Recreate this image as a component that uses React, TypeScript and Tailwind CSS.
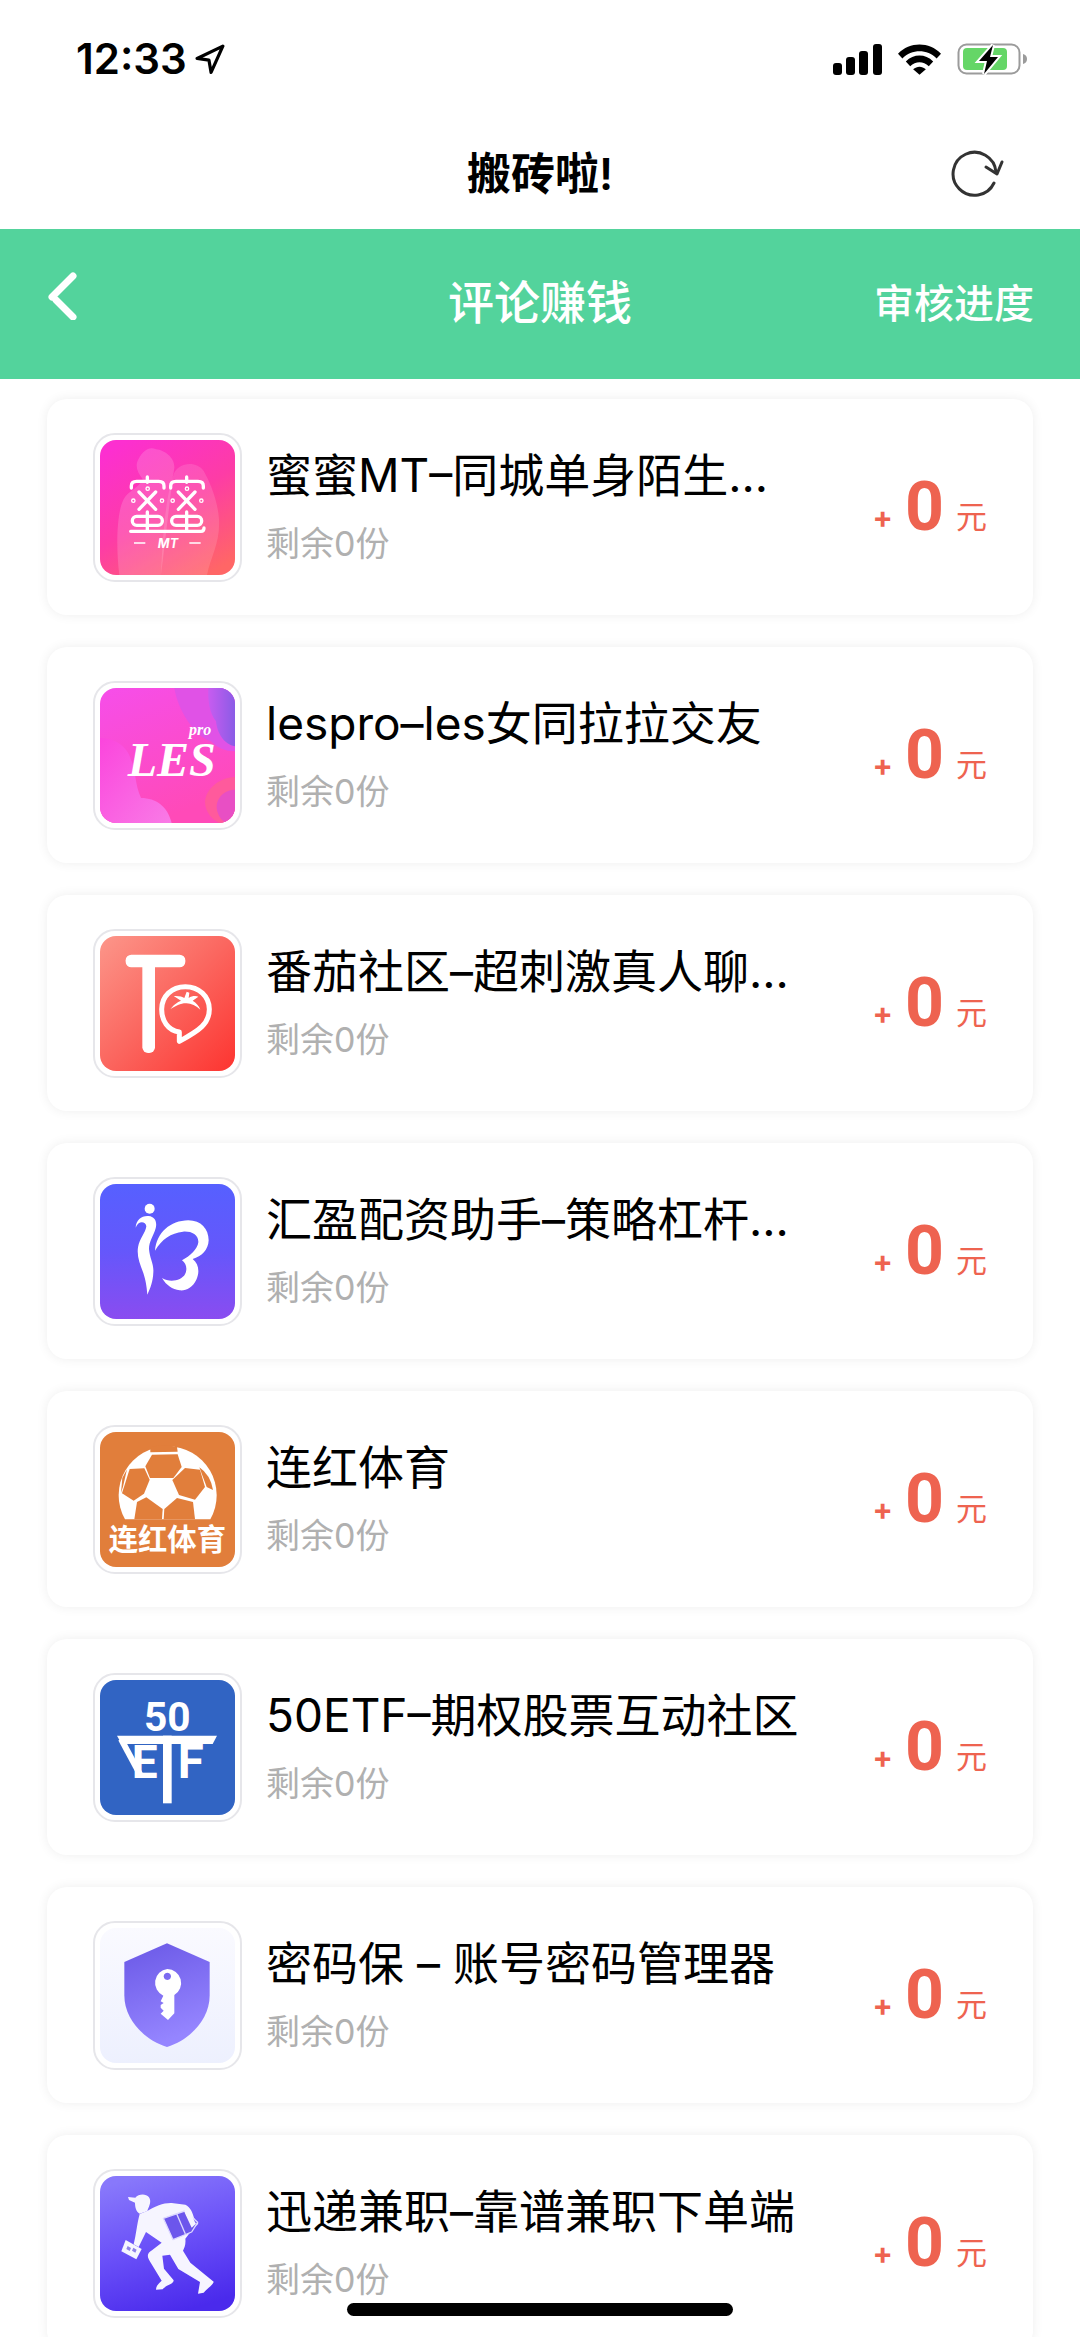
import React from 'react';

type Task = {
  name: string;
  left: number;
  reward: number;
  icon: React.ReactNode;
};

const MimiIcon = () => (
  <svg viewBox="47 52 405 405" className="size-full" aria-hidden="true">
    <defs>
      <linearGradient id="mimi" x1="0.2" y1="0" x2="0.8" y2="1">
        <stop offset="0" stopColor="#fc2fd0" />
        <stop offset="0.5" stopColor="#fd3ca6" />
        <stop offset="1" stopColor="#ff6666" />
      </linearGradient>
    </defs>
    <rect x="47" y="52" width="405" height="405" fill="url(#mimi)" />
    <path
      d="M105 457C95 380 96 270 118 230 130 205 160 200 175 170 160 150 150 130 163 108 175 85 195 70 215 80 240 82 272 105 270 135 268 155 262 170 262 190L230 457z"
      fill="#fff"
      opacity="0.16"
    />
    <path
      d="M230 457C235 330 245 220 268 155 280 120 335 112 358 145 375 175 400 230 404 290 408 360 380 400 368 457z"
      fill="#fff"
      opacity="0.13"
    />
    {[0, 118].map((dx) => (
      <g key={dx} transform={`translate(${dx} 0)`} stroke="#fff" strokeWidth="10" strokeLinecap="round" fill="none">
        <path d="M189 163v16M141 196v-6q0-14 16-14h66q16 0 16 14v6" />
        <path d="M164 208l50 52M214 208l-50 52" />
        <circle cx="190" cy="198" r="2" />
        <circle cx="147" cy="234" r="2" />
        <circle cx="233" cy="234" r="2" />
        <rect x="144" y="281" width="90" height="27" rx="13" />
        <path d="M189 268v56" />
      </g>
    ))}
    <path d="M139 326h211q9 0 9-10" stroke="#fff" strokeWidth="10" strokeLinecap="round" fill="none" />
    <path d="M149 361h34M315 361h34" stroke="#fff" strokeWidth="5" />
    <text x="251" y="375" textAnchor="middle" className="fill-white text-[38px] font-bold italic">
      MT
    </text>
  </svg>
);

const LesIcon = () => (
  <svg viewBox="47 45 405 405" className="size-full" aria-hidden="true">
    <defs>
      <linearGradient id="les" x1="0" y1="0" x2="0.4" y2="1">
        <stop offset="0" stopColor="#f64eea" />
        <stop offset="1" stopColor="#ff4ab8" />
      </linearGradient>
      <linearGradient id="lesCorner" x1="0" y1="0" x2="1" y2="0">
        <stop offset="0" stopColor="#c85cf0" />
        <stop offset="1" stopColor="#8a5ce6" />
      </linearGradient>
      <linearGradient id="lesWave" x1="0" y1="0" x2="1" y2="1">
        <stop offset="0" stopColor="#fb45dd" />
        <stop offset="1" stopColor="#f97be6" />
      </linearGradient>
    </defs>
    <rect x="47" y="45" width="405" height="405" fill="url(#les)" />
    <path d="M270 45H452V235C420 235 400 225 380 205 330 190 280 110 270 45z" fill="#e052e6" />
    <path d="M372 45H452V220C420 215 398 180 395 145 375 120 370 80 372 45z" fill="url(#lesCorner)" />
    <path d="M47 195C90 195 130 220 140 260 155 290 150 330 170 375 215 375 250 400 262 450H47z" fill="url(#lesWave)" />
    <path d="M452 312C400 315 365 350 362 385 362 420 385 440 405 450H452z" fill="#ff5a9c" />
    <path d="M452 350C420 350 395 375 397 405 400 430 415 445 425 450H452z" fill="#e84fc4" />
    <text x="130" y="310" className="fill-white font-['Liberation_Serif',serif] text-[144px] font-bold italic">
      LES
    </text>
    <text x="314" y="185" className="fill-white font-['Liberation_Serif',serif] text-[48px] font-bold italic">
      pro
    </text>
  </svg>
);

const TomatoIcon = () => (
  <svg viewBox="47 52 405 405" className="size-full" aria-hidden="true">
    <defs>
      <linearGradient id="tomato" x1="0" y1="0" x2="1" y2="1">
        <stop offset="0" stopColor="#fc968a" />
        <stop offset="0.5" stopColor="#fb665f" />
        <stop offset="1" stopColor="#fd3430" />
      </linearGradient>
    </defs>
    <rect x="47" y="52" width="405" height="405" fill="url(#tomato)" />
    <rect x="124" y="108" width="179" height="38" rx="17" fill="#fff" />
    <rect x="174" y="112" width="38" height="291" rx="17" fill="#fff" />
    <path
      d="M285 368v-28C250 335 232 305 232 272 232 233 262 204 303 204S375 233 375 272C375 315 345 335 285 368z"
      stroke="#fff"
      strokeWidth="15"
      strokeLinejoin="round"
      fill="none"
    />
    <path
      d="M258 272C270 255 282 250 290 246L268 232C284 231 294 234 300 238L307 219 315 222 313 238C322 232 334 231 342 234L325 246C336 252 344 262 348 273 335 260 318 253 304 254 290 254 272 262 258 272z"
      fill="#fff"
    />
  </svg>
);

const HuiyingIcon = () => (
  <svg viewBox="47 45 405 405" className="size-full" aria-hidden="true">
    <defs>
      <linearGradient id="huiying" x1="0" y1="0" x2="0" y2="1">
        <stop offset="0" stopColor="#5660ff" />
        <stop offset="0.5" stopColor="#6557fb" />
        <stop offset="1" stopColor="#8a4cf0" />
      </linearGradient>
    </defs>
    <rect x="47" y="45" width="405" height="405" fill="url(#huiying)" />
    <circle cx="196" cy="119" r="15" fill="#fff" />
    <path
      d="M154 176C155 152 173 139 193 141 212 143 219 158 214 178 208 200 194 218 194 240 196 268 209 285 207 310 206 338 198 358 189 377 187 350 184 335 177 312 167 285 157 262 161 235 166 207 184 191 186 172 184 157 162 154 154 176z"
      fill="#fff"
    />
    <path
      d="M212 245C217 190 258 155 312 154 350 154 373 180 373 214 372 243 352 262 325 270 343 284 347 308 336 332 325 355 305 366 286 364 264 361 246 349 233 327 258 343 292 334 302 316 310 300 306 283 293 274 317 262 340 240 342 220 343 196 320 186 296 188 260 192 232 211 212 245z"
      fill="#fff"
    />
  </svg>
);

const FootballIcon = () => (
  <svg viewBox="47 52 405 405" className="size-full" aria-hidden="true">
    <rect x="47" y="52" width="405" height="405" fill="#e17e3b" />
    <path d="M122 314A147 147 0 1 1 378 314z" fill="#fff" />
    <g fill="#e17e3b">
      <path d="M203 120l77-1 12 38-25 33H197l-14-35z" />
      <path d="M198 98Q240 86 278 97l2 14-82 2z" />
      <path d="M136 163l44-2 16 34-17 42-31 21-35-22z" />
      <path d="M302 160l45 5 15 52-30 38-48-14-20-45z" />
      <path d="M345 158Q378 180 386 226l-19-9z" />
      <path d="M186 248l49 35-2 31H150l8-52z" />
      <path d="M278 250l48 12 6 52H238l2-31z" />
      <path d="M114 190l14-26-12 52-6 18z" />
    </g>
    <text x="249" y="405" textAnchor="middle" className="fill-white text-[88px] font-bold">
      连红体育
    </text>
  </svg>
);

const EtfIcon = () => (
  <svg viewBox="47 45 405 405" className="size-full" aria-hidden="true">
    <rect x="47" y="45" width="405" height="405" fill="#3164c3" />
    <text x="249" y="199" textAnchor="middle" className="fill-white font-[Roboto,sans-serif] text-[122px] font-bold">
      50
    </text>
    <path d="M98 212h300l-13 25H112z" fill="#fff" />
    <path d="M110 222L168 330" stroke="#fff" strokeWidth="18" />
    <rect x="236" y="212" width="26" height="203" fill="#fff" />
    <text x="142" y="338" className="fill-white font-[Roboto,sans-serif] text-[138px] font-bold">
      E
    </text>
    <text x="280" y="338" className="fill-white font-[Roboto,sans-serif] text-[142px] font-bold">
      F
    </text>
  </svg>
);

const ShieldIcon = () => (
  <svg viewBox="47 55 405 405" className="size-full" aria-hidden="true">
    <defs>
      <linearGradient id="shieldBg" x1="0" y1="0" x2="0" y2="1">
        <stop offset="0" stopColor="#fafaff" />
        <stop offset="1" stopColor="#edf0fe" />
      </linearGradient>
      <linearGradient id="shield" x1="0" y1="0" x2="0.3" y2="1">
        <stop offset="0" stopColor="#6a58e6" />
        <stop offset="1" stopColor="#9585ff" />
      </linearGradient>
    </defs>
    <rect x="47" y="52" width="405" height="410" fill="url(#shieldBg)" />
    <path d="M248 101L376 157V258C376 325 320 390 248 412 176 390 120 325 120 258V157z" fill="url(#shield)" />
    <path
      d="M249 178a42 42 0 0 1 21 78V311L251 331 229 312 238 303 229 294V286L238 280 229 275 237 258A42 42 0 0 1 249 178zM249 189a11 11 0 1 0 .1 0z"
      fill="#fff"
      fillRule="evenodd"
    />
  </svg>
);

const CourierIcon = () => (
  <svg viewBox="47 47 405 405" className="size-full" aria-hidden="true">
    <defs>
      <linearGradient id="courier" x1="0.3" y1="0" x2="0.6" y2="1">
        <stop offset="0" stopColor="#8878fb" />
        <stop offset="0.5" stopColor="#6a50f8" />
        <stop offset="1" stopColor="#4a2aec" />
      </linearGradient>
    </defs>
    <rect x="47" y="45" width="405" height="410" fill="url(#courier)" />
    <g fill="#f6f5ff">
      <path d="M131 110L153 112C162 101 184 98 194 111 203 125 193 140 189 152L166 160C155 153 152 140 152 127L134 119z" />
      <path d="M166 161L190 151C212 138 238 127 262 128L303 133C318 140 324 155 329 172L342 190 325 206 303 235C305 252 300 262 296 271L318 307 388 364C389 372 368 385 358 397L341 400 347 365 282 326 257 283 234 286 239 325 268 360C268 372 245 374 235 387L215 388C215 375 225 368 232 361L202 312C186 288 187 280 203 270L232 247 185 215 163 260 148 252C155 225 158 190 166 161z" />
      <path d="M124 239L172 266 156 297 111 273z" />
    </g>
    <path d="M237 174L301 152 340 186 322 215 266 238z" fill="#6c56ec" stroke="#ddd8ff" strokeWidth="4" strokeLinejoin="round" />
    <path d="M277 160L303 221" stroke="#ddd8ff" strokeWidth="4" />
    <path d="M300 140C318 148 323 170 335 190L322 202 314 185 301 157z" fill="#f6f5ff" />
    <path d="M130 257l10 6-4 9-10-6zM147 262l10 6-4 9-10-6z" fill="#8f82e8" />
  </svg>
);

const tasks: Task[] = [
  { name: '蜜蜜MT–同城单身陌生...', left: 0, reward: 0, icon: <MimiIcon /> },
  { name: 'lespro–les女同拉拉交友', left: 0, reward: 0, icon: <LesIcon /> },
  { name: '番茄社区–超刺激真人聊...', left: 0, reward: 0, icon: <TomatoIcon /> },
  { name: '汇盈配资助手–策略杠杆...', left: 0, reward: 0, icon: <HuiyingIcon /> },
  { name: '连红体育', left: 0, reward: 0, icon: <FootballIcon /> },
  { name: '50ETF–期权股票互动社区', left: 0, reward: 0, icon: <EtfIcon /> },
  { name: '密码保 – 账号密码管理器', left: 0, reward: 0, icon: <ShieldIcon /> },
  { name: '迅递兼职–靠谱兼职下单端', left: 0, reward: 0, icon: <CourierIcon /> },
];

const StatusBar = () => (
  <div className="flex h-[118px] shrink-0 items-center justify-between pr-[53px] pl-[76px]">
    <div className="flex items-center gap-2">
      <span className="text-[42px] leading-none font-semibold">12:33</span>
      <svg viewBox="0 0 28 28" className="size-[30px]" aria-hidden="true">
        <path d="M26 2L2 13.500l11 1.500 2 11.500z" fill="none" stroke="#000" strokeWidth="3" strokeLinejoin="round" />
      </svg>
    </div>
    <div className="flex items-center gap-4">
      <svg viewBox="0 0 49 31" className="h-[31px] w-[49px]" aria-hidden="true">
        <rect x="0" y="19" width="9" height="12" rx="3" />
        <rect x="13" y="13" width="9" height="18" rx="3" />
        <rect x="26" y="7" width="9" height="24" rx="3" />
        <rect x="40" y="0" width="9" height="31" rx="3" />
      </svg>
      <svg viewBox="0 0 44 31" className="h-[31px] w-[43px]" aria-hidden="true">
        <path d="M0 9.500C12-3 32-3 44 9.500l-4.500 5C30 4.500 14 4.500 4.500 14.500z" />
        <path d="M8 17.500c8-8 20-8 28 0l-4.500 5c-5.500-5.500-13.500-5.500-19 0z" />
        <path d="M15.500 25.500c4-3.500 9-3.500 13 0L22 31z" />
      </svg>
      <svg viewBox="0 0 70 36" className="h-[36px] w-[70px]" aria-hidden="true">
        <rect x="1.500" y="3.500" width="61" height="29" rx="8" fill="none" stroke="#9b9b9b" strokeWidth="2" />
        <path d="M66 13q4 1 4 5t-4 5z" fill="#9b9b9b" />
        <rect x="6" y="7" width="44" height="22" rx="4" fill="#65d667" />
        <path d="M36 4L22 20h8l-3 13 14-17h-8z" fill="#000" stroke="#fff" strokeWidth="4" paintOrder="stroke" />
      </svg>
    </div>
  </div>
);

const TaskCard = ({ task }: { task: Task }) => (
  <li className="flex h-[216px] shrink-0 items-center rounded-[20px] bg-white px-[46px] shadow-[0_0_12px_rgba(0,0,0,0.07)]">
    <div className="size-[149px] shrink-0 rounded-[22px] border-2 border-[#e6e6ea] bg-white p-[5px]">
      <div className="size-full overflow-hidden rounded-[16px]">{task.icon}</div>
    </div>
    <div className="ml-6 min-w-0 flex-1 pt-[6px]">
      <h2 className="truncate text-[46px] leading-[68px]">{task.name}</h2>
      <p className="text-[34px] leading-[70px] text-[#b0b0b0]">剩余{task.left}份</p>
    </div>
    <p className="flex shrink-0 items-end text-[#ee6350]">
      <span className="text-[30px] leading-[52px] font-bold">+</span>
      <span className="mx-3 font-['Liberation_Sans_Narrow',Roboto,sans-serif] text-[68px] leading-[72px] font-bold">
        {task.reward}
      </span>
      <span className="text-[31px] leading-[52px]">元</span>
    </p>
  </li>
);

const App = () => {
  return (
    <div className="relative flex h-screen flex-col overflow-hidden bg-white font-[Inter,'Noto_Sans_CJK_SC',sans-serif] text-black">
      <StatusBar />
      <header className="grid h-[111px] shrink-0 grid-cols-3 items-center px-[76px]">
        <h1 className="col-start-2 text-center text-[44px] leading-none font-semibold">搬砖啦!</h1>
        <button type="button" aria-label="刷新" className="justify-self-end">
          <svg viewBox="0 0 54 50" className="h-[50px] w-[54px]" fill="none" stroke="#333" strokeWidth="3" strokeLinecap="round" strokeLinejoin="round">
            <path d="M44 34A21.500 21.500 0 1 1 46 23" />
            <path d="M36 18l11 7 5-12" />
          </svg>
        </button>
      </header>
      <nav className="grid h-[150px] shrink-0 grid-cols-3 items-center bg-[#53d39c] px-[46px] text-white">
        <button type="button" aria-label="返回" className="justify-self-start pb-4">
          <svg viewBox="0 0 32 48" className="h-[48px] w-[32px]" fill="none" stroke="currentColor" strokeWidth="7" strokeLinecap="round">
            <path d="M27 4L6 25M10 28l17 17" />
          </svg>
        </button>
        <h2 className="pb-1 text-center text-[46px] leading-none font-medium">评论赚钱</h2>
        <a href="#progress" className="justify-self-end text-[40px] leading-none font-medium">
          审核进度
        </a>
      </nav>
      <ul className="flex flex-col gap-8 px-[47px] pt-5">
        {tasks.map((task) => (
          <TaskCard key={task.name} task={task} />
        ))}
      </ul>
      <div className="absolute bottom-[21px] left-1/2 h-[13px] w-[386px] -translate-x-1/2 rounded-full bg-black" />
    </div>
  );
};

export default App;
